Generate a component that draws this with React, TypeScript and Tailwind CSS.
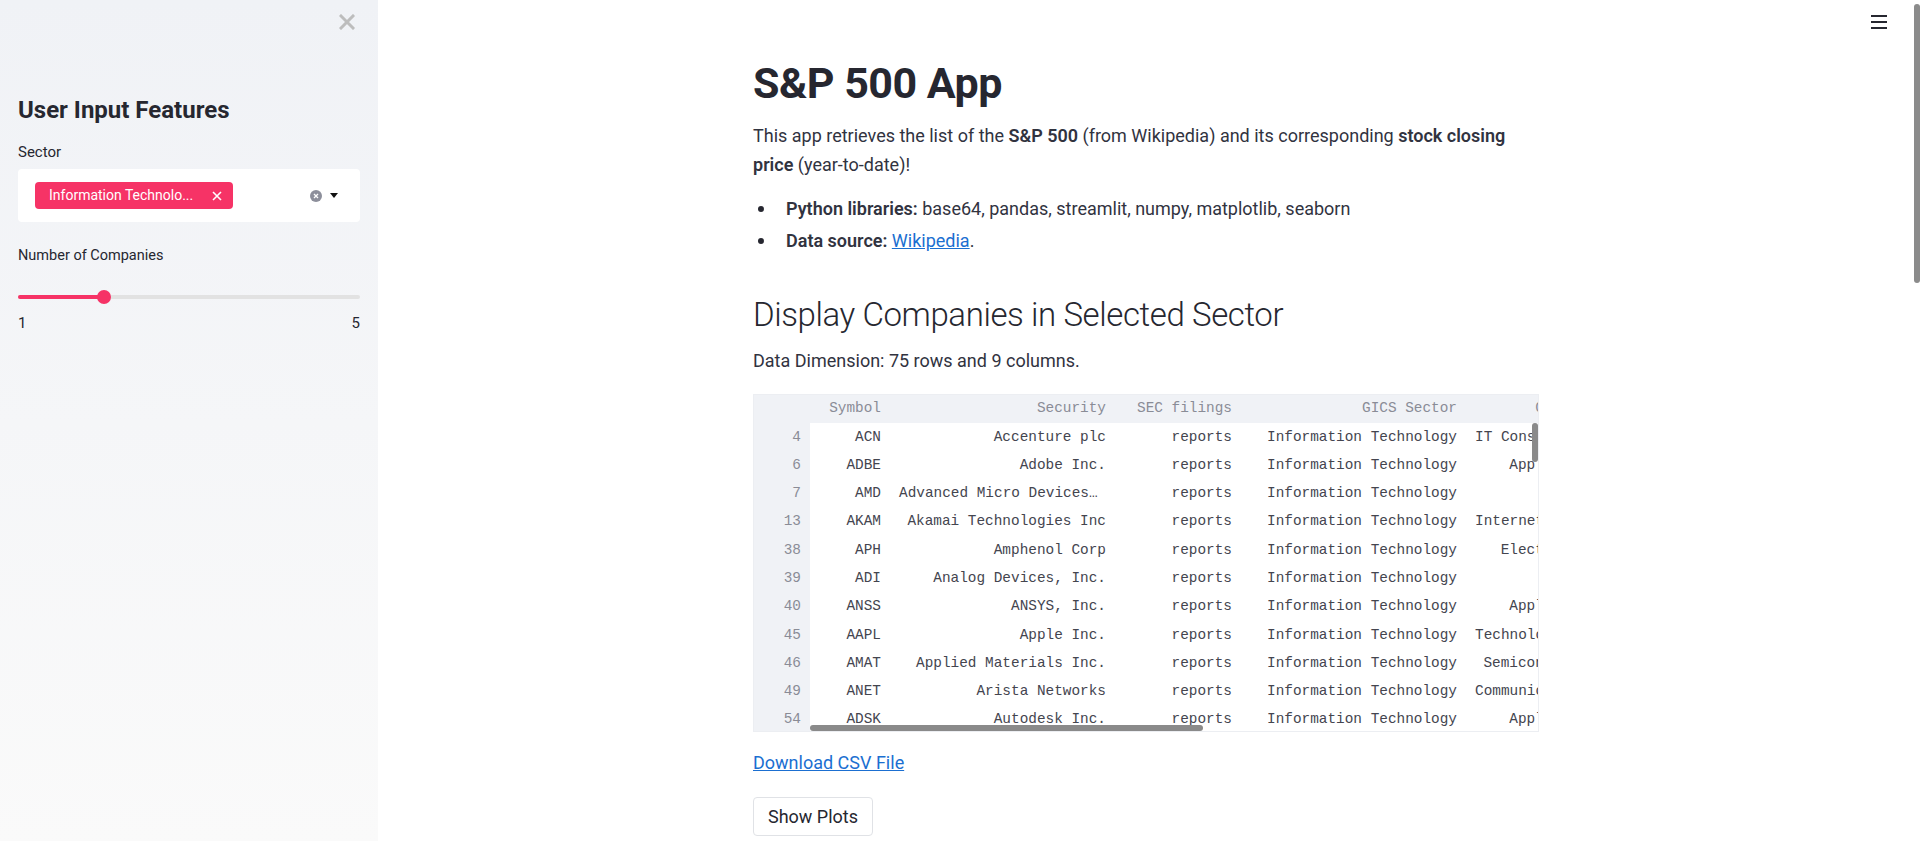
import React from "react";

const sans = "font-['Roboto','Liberation_Sans',sans-serif]";
const mono = "font-['Liberation_Mono','DejaVu_Sans_Mono',monospace]";

interface Row {
  idx: number;
  symbol: string;
  security: string;
  sector: string;
  sub: string;
}

const rows: Row[] = [
  { idx: 4, symbol: "ACN", security: "Accenture plc", sector: "Information Technology", sub: "IT Consulting & Other Services" },
  { idx: 6, symbol: "ADBE", security: "Adobe Inc.", sector: "Information Technology", sub: "Application Software" },
  { idx: 7, symbol: "AMD", security: "Advanced Micro Devices Inc", sector: "Information Technology", sub: "Semiconductors" },
  { idx: 13, symbol: "AKAM", security: "Akamai Technologies Inc", sector: "Information Technology", sub: "Internet Services & Infrastructure" },
  { idx: 38, symbol: "APH", security: "Amphenol Corp", sector: "Information Technology", sub: "Electronic Components" },
  { idx: 39, symbol: "ADI", security: "Analog Devices, Inc.", sector: "Information Technology", sub: "Semiconductors" },
  { idx: 40, symbol: "ANSS", security: "ANSYS, Inc.", sector: "Information Technology", sub: "Application Software" },
  { idx: 45, symbol: "AAPL", security: "Apple Inc.", sector: "Information Technology", sub: "Technology Hardware, Storage & Peripherals" },
  { idx: 46, symbol: "AMAT", security: "Applied Materials Inc.", sector: "Information Technology", sub: "Semiconductor Equipment" },
  { idx: 49, symbol: "ANET", security: "Arista Networks", sector: "Information Technology", sub: "Communications Equipment" },
  { idx: 54, symbol: "ADSK", security: "Autodesk Inc.", sector: "Information Technology", sub: "Application Software" },
];

const Sidebar: React.FC = () => (
  <aside className={`w-[378px] shrink-0 h-full bg-gradient-to-b from-[#f0f2f6] to-[#fafafa] ${sans} text-[#262730]`}>
    <div className="flex justify-end pt-[14px] pr-[23px]">
      <svg width="16" height="16" viewBox="0 0 16 16" className="text-[#bdbdbd]">
        <path d="M2 2L14 14M14 2L2 14" stroke="currentColor" strokeWidth="3" strokeLinecap="square" />
      </svg>
    </div>
    <div className="px-[18px]">
      <h2 className="mt-[67px] text-[24px] font-bold leading-[27px]">User Input Features</h2>

      <div className="mt-[16px] text-[15px] leading-[24px]">Sector</div>
      <div className="mt-[5px] h-[53px] bg-white rounded-[4px] flex items-center pl-[17px] pr-[22px]">
        <div className="h-[27px] w-[198px] bg-[#f63366] rounded-[4px] flex items-center pl-[14px] pr-[11px] text-white text-[14px]">
          <span className="flex-1">Information Technolo...</span>
          <svg width="10" height="10" viewBox="0 0 10 10">
            <path d="M1 1L9 9M9 1L1 9" stroke="white" strokeWidth="1.6" />
          </svg>
        </div>
        <div className="flex-1" />
        <svg width="12" height="12" viewBox="0 0 12 12">
          <circle cx="6" cy="6" r="6" fill="#8d8f9b" />
          <path d="M4 4L8 8M8 4L4 8" stroke="white" strokeWidth="1.3" />
        </svg>
        <svg width="8" height="5" viewBox="0 0 8 5" className="ml-[8px]">
          <path d="M0 0H8L4 5Z" fill="#111" />
        </svg>
      </div>

      <div className="mt-[22px] text-[14.5px] leading-[24px]">Number of Companies</div>
      <div className="relative mt-[27px] h-[4px] rounded-full bg-[#e2e2e2]">
        <div className="h-full w-[86px] rounded-full bg-[#f63366]" />
        <div className="absolute left-[79px] top-[-5px] w-[14px] h-[14px] rounded-full bg-[#f63366]" />
      </div>
      <div className="mt-[14px] flex justify-between text-[15px] leading-[20px]">
        <span>1</span>
        <span>5</span>
      </div>
    </div>
  </aside>
);

const cellBase = "px-[9px] whitespace-nowrap overflow-hidden text-ellipsis text-right";

const DataTable: React.FC = () => (
  <div className={`relative mt-[18px] h-[338px] border border-[#eceef2] overflow-hidden ${mono} text-[14.4px]`}>
    <div className="w-[1200px]">
      <div className="flex h-[28px] items-center bg-[#f0f2f6] text-[#8a8c96]">
        <div className="w-[56px] shrink-0" />
        <div className={`w-[80px] shrink-0 ${cellBase}`}>Symbol</div>
        <div className={`w-[225px] shrink-0 ${cellBase}`}>Security</div>
        <div className={`w-[126px] shrink-0 ${cellBase}`}>SEC filings</div>
        <div className={`w-[225px] shrink-0 ${cellBase}`}>GICS Sector</div>
        <div className={`w-[225px] shrink-0 ${cellBase}`}>GICS Sub-Industry</div>
      </div>
      {rows.map((r) => (
        <div key={r.idx} className="flex h-[28.3px] items-center text-[#44454f]">
          <div className="w-[56px] shrink-0 h-full flex items-center justify-end pr-[9px] bg-[#f0f2f6] text-[#8a8c96]">
            {r.idx}
          </div>
          <div className={`w-[80px] shrink-0 ${cellBase}`}>{r.symbol}</div>
          <div className={`w-[225px] shrink-0 ${cellBase}`}>{r.security}</div>
          <div className={`w-[126px] shrink-0 ${cellBase}`}>reports</div>
          <div className={`w-[225px] shrink-0 ${cellBase}`}>{r.sector}</div>
          <div className={`w-[225px] shrink-0 ${cellBase}`}>{r.sub}</div>
        </div>
      ))}
    </div>
    <div className="absolute right-0 top-[28px] w-[6px] h-[39px] rounded-full bg-[#8a8a8a]" />
    <div className="absolute left-[56px] bottom-0 w-[393px] h-[6px] rounded-full bg-[#8a8a8a]" />
  </div>
);

const Bullet: React.FC = () => (
  <span className="w-[33px] shrink-0 flex items-center pl-[5px]">
    <span className="w-[6px] h-[6px] rounded-full bg-[#262730]" />
  </span>
);

const App: React.FC = () => {
  return (
    <div className="flex h-[841px] w-full overflow-hidden bg-white">
      <Sidebar />
      <main className={`relative flex-1 h-full ${sans} text-[#262730]`}>
        <div className="absolute right-[27px] top-[15px] flex flex-col gap-[4px]">
          <div className="w-[16px] h-[2px] bg-[#262730]" />
          <div className="w-[16px] h-[2px] bg-[#262730]" />
          <div className="w-[16px] h-[2px] bg-[#262730]" />
        </div>
        <div className="mx-auto w-[786px] pt-[54px]">
          <h1 className="text-[43px] font-bold leading-[59px] tracking-[-0.5px]">S&amp;P 500 App</h1>
          <p className="mt-[9px] text-[18px] leading-[28.8px] text-[#31333f]">
            This app retrieves the list of the <b className="font-semibold">S&amp;P 500</b> (from Wikipedia) and its corresponding <b className="font-semibold">stock closing price</b> (year-to-date)!
          </p>
          <ul className="mt-[15px] text-[18px] leading-[28.8px] flex flex-col gap-[3.2px] text-[#31333f]">
            <li className="flex">
              <Bullet />
              <span><b className="font-semibold">Python libraries:</b> base64, pandas, streamlit, numpy, matplotlib, seaborn</span>
            </li>
            <li className="flex">
              <Bullet />
              <span><b className="font-semibold">Data source:</b> <a className="text-[#1b6fd1] underline">Wikipedia</a>.</span>
            </li>
          </ul>
          <h2 className="mt-[36px] text-[33px] font-light leading-[48px] tracking-[-0.4px]">Display Companies in Selected Sector</h2>
          <p className="mt-[8px] text-[18px] leading-[28.8px] text-[#31333f]">Data Dimension: 75 rows and 9 columns.</p>
          <DataTable />
          <p className="mt-[17px] text-[18px] leading-[28.8px]">
            <a className="text-[#1b6fd1] underline">Download CSV File</a>
          </p>
          <button className="mt-[19px] h-[39px] px-[14px] rounded-[4px] border border-[#e0e2e6] bg-white text-[18px] text-[#262730]">
            Show Plots
          </button>
        </div>
      </main>
      <div className="w-[6px] shrink-0 h-full pt-[4px]">
        <div className="w-full h-[279px] rounded-full bg-[#8b8b8b]" />
      </div>
    </div>
  );
};

export default App;
